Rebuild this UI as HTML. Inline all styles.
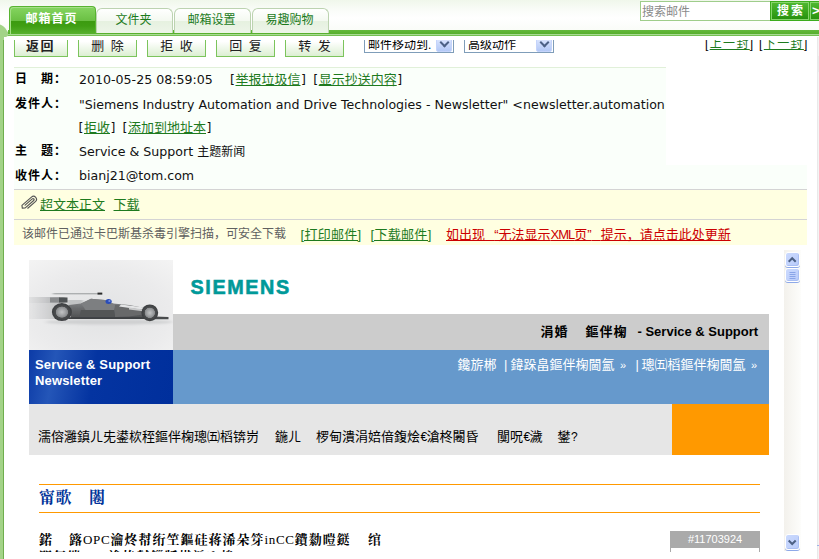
<!DOCTYPE html>
<html lang="zh-CN">
<head>
<meta charset="utf-8">
<title>邮箱</title>
<style>
*{box-sizing:border-box;margin:0;padding:0}
html,body{width:819px;height:559px;overflow:hidden;background:#fff}
body{position:relative;font-family:"Liberation Sans","Noto Sans CJK SC",sans-serif;font-size:12px;color:#000}
.abs{position:absolute}
a{color:#1e7a1e;text-decoration:underline}
/* top */
#topbg{left:0;top:0;width:819px;height:33px;background:linear-gradient(#f0f7eb 0,#fbfdfa 35%,#ffffff 55%,#f8fbf6 100%)}
#leftbar{left:0;top:24px;width:5px;height:535px;background:#a5d18b;border-right:1px solid #63ad42;border-top-right-radius:0}
#greenbar{left:8px;top:30px;width:815px;height:6px;background:linear-gradient(#63b93b 0,#58b02f 60%,#a9da94 70%,#a9da94 82%,#74c052 84%,#74c052 100%)}
.tab{top:8px;height:25px;border:1px solid #bcd3b0;border-bottom:none;border-radius:6px 6px 0 0;background:linear-gradient(#ffffff 0%,#f4f9f1 48%,#e6f1e0 52%,#edf5e9 100%);color:#1b7a1b;font-size:12px;text-indent:-2px;text-align:center;line-height:22px}
.tab.on{top:6px;height:28px;border:1px solid #58b431;border-bottom:none;border-radius:4px 4px 0 0;background:linear-gradient(#85d560 0%,#6bc044 50%,#3c9b10 53%,#3f9e13 70%,#57b12e 100%);box-shadow:inset 1px 1px 0 #a4e087;color:#fff;font-weight:bold;line-height:25px;letter-spacing:1px}
#search{left:640px;top:1px;width:131px;height:20px;border:1px solid #9fcd8b;background:#fff;color:#8a8a8a;font-size:12px;line-height:20px;padding-left:1px}
#sbtn{left:770px;top:1px;width:40px;height:20px;background:linear-gradient(#52b933 0,#3aa61d 50%,#258f0d 100%);border:1px solid #3cac1c;box-shadow:inset 0 0 0 1px #86d56b;color:#fff;font-weight:bold;font-size:12px;line-height:18px;text-align:center;letter-spacing:2px;padding-left:2px}
#sbtn2{left:809px;top:1px;width:12px;height:20px;background:linear-gradient(#52b933 0,#3aa61d 50%,#258f0d 100%);border:1px solid #3cac1c;box-shadow:inset 0 0 0 1px #86d56b;color:#fff;font-weight:bold;font-size:13px;line-height:17px;text-align:left;padding-left:2px}
.btn{word-spacing:3px;top:-6px;height:23px;border:1px solid #7cc45c;background:linear-gradient(#ffffff 30%,#dcefd2 100%);font-size:13px;color:#222;text-align:center;line-height:22px;overflow:hidden}
.sel{top:-6px;height:19px;border:1px solid #7f9db9;background:#fff;font-size:12px;line-height:20px;padding-left:3px;overflow:hidden;white-space:nowrap}
.sel i{position:absolute;right:1px;top:1px;width:16px;height:16px;background:linear-gradient(#e2eaff,#b3c8f6);border-radius:2px;border:1px solid #c5d4fb}
.sel i:after{content:"";position:absolute;left:4px;top:2px;width:5px;height:5px;border-right:2px solid #4d6185;border-bottom:2px solid #4d6185;transform:rotate(45deg)}
#hdr{left:14px;top:67px;width:793px;height:122px;background:#fafffa;border-top:1px solid #e1f0d9}
#hdrwhite{left:666px;top:66px;width:141px;height:99px;background:#fff}
.lab{left:15px;font-weight:bold;font-size:12px;letter-spacing:1px;white-space:nowrap}
.val{left:79px;font-family:"DejaVu Sans","Noto Sans CJK SC",sans-serif;font-size:12.6px;line-height:18px;white-space:nowrap;color:#111}
.val a,.val span{font-size:13px;line-height:1}
.br{display:inline-block;width:5.9px;text-align:center;font-weight:normal}
#att{left:14px;top:189px;width:793px;height:30px;background:#ffffe1;border-top:1px solid #d4d4d4}
#scan{left:14px;top:219px;width:793px;height:26px;background:#ffffe1;border-top:1px solid #d4d4d4}
.sb{width:15px;height:16px;border:1px solid #fff;border-radius:3px;background:linear-gradient(135deg,#cbdafe,#b9cbfa);box-shadow:0 1px 0 #8ea9e8, inset -1px -1px 0 #aabff3;overflow:hidden}
.q{letter-spacing:5.5px}
.t1{top:73px;font-weight:bold;font-size:13px;line-height:18px;white-space:nowrap;color:#000}
.t2{top:106px;font-size:13px;line-height:18px;white-space:nowrap;color:#fff}
.t3{top:178px;font-size:13px;line-height:18px;white-space:nowrap;color:#000}
.eu{display:inline-block;width:6.5px;font-family:'Liberation Sans',sans-serif;font-size:12px;text-align:center;letter-spacing:-1px}
.t4{top:237px;font-family:'Liberation Serif','Noto Serif CJK SC',serif;font-weight:bold;font-size:16px;line-height:22px;white-space:nowrap;color:#003399;letter-spacing:0.5px}
.t5{top:281px;font-family:'Liberation Serif','Noto Serif CJK SC',serif;font-weight:bold;font-size:13px;line-height:18px;white-space:nowrap;color:#000;letter-spacing:1px}
.la{font-weight:normal;letter-spacing:0.7px}
</style>
</head>
<body>
<div class="abs" id="topbg"></div>
<svg class="abs" style="left:0;top:0" width="12" height="559" viewBox="0 0 12 559"><path d="M0 24.5 Q4.5 26 6.5 30 Q7.5 32.5 10 33.5 L10 37 L4 37 L4 559 L0 559 Z" fill="#a3d388"/><rect x="3" y="40" width="1" height="519" fill="#6fae4e"/></svg>
<div class="abs" id="greenbar"></div>

<div class="abs tab on" style="left:9px;width:87px">邮箱首页</div>
<div class="abs tab" style="left:96px;width:77px">文件夹</div>
<div class="abs tab" style="left:174px;width:77px">邮箱设置</div>
<div class="abs tab" style="left:252px;width:77px">易趣购物</div>

<div class="abs" id="search">搜索邮件</div>
<div class="abs" id="sbtn">搜索</div>
<div class="abs" id="sbtn2">&gt;</div>

<!-- white panel -->
<div class="abs" id="panel" style="left:4px;top:36px;width:815px;height:523px;background:#fff;border-top-left-radius:5px"></div>

<div class="abs" id="tool" style="left:0;top:40px;width:819px;height:26px;overflow:hidden">
<div class="abs btn" style="left:14px;width:54px;font-weight:bold;letter-spacing:1.5px;text-indent:-1px">返回</div>
<div class="abs btn" style="left:78px;width:59px">删 除</div>
<div class="abs btn" style="left:147px;width:59px">拒 收</div>
<div class="abs btn" style="left:216px;width:59px">回 复</div>
<div class="abs btn" style="left:285px;width:59px">转 发</div>
<div class="abs sel" style="left:364px;width:90px">邮件移动到.<i></i></div>
<div class="abs sel" style="left:464px;width:90px">高级动作<i></i></div>
<div class="abs" style="left:705px;top:-4px;font-size:12px;letter-spacing:1.35px;white-space:nowrap;line-height:16px">[<a href="#">上一封</a>] [<a href="#">下一封</a>]</div>

</div>
<div class="abs" id="hdr"></div>
<div class="abs" id="hdrwhite"></div>
<div class="abs lab" style="top:69px">日　期：</div>
<div class="abs val" style="top:71px">2010-05-25 08:59:05</div>
<div class="abs val" style="top:71px;left:229.6px"><b class="br">[</b><a href="#">举报垃圾信</a><b class="br">]</b></div>
<div class="abs val" style="top:71px;left:312.8px"><b class="br">[</b><a href="#">显示抄送内容</a><b class="br">]</b></div>
<div class="abs lab" style="top:94px">发件人：</div>
<div class="abs val" style="top:95.5px;width:586.2px;overflow:hidden">"Siemens Industry Automation and Drive Technologies - Newsletter" &lt;newsletter.automation@siemens.com&gt;</div>
<div class="abs val" style="top:118.5px;left:78.1px"><b class="br">[</b><a href="#">拒收</a><b class="br">]</b></div>
<div class="abs val" style="top:118.5px;left:122.1px"><b class="br">[</b><a href="#">添加到地址本</a><b class="br">]</b></div>
<div class="abs lab" style="top:141px">主　题：</div>
<div class="abs val" style="top:143px">Service &amp; Support <span style="font-size:12px">主题新闻</span></div>
<div class="abs lab" style="top:166px">收件人：</div>
<div class="abs val" style="top:167px">bianj21@tom.com</div>

<div class="abs" id="att"></div>
<svg class="abs" style="left:20px;top:194px" width="18" height="18" viewBox="0 0 18 18"><g transform="translate(9.2 9) rotate(-41)" fill="none" stroke="#565656" stroke-width="1.15" stroke-linejoin="round" stroke-linecap="round"><path d="M-4.5 -1.1 L5 -1.1 A1.1 1.1 0 0 1 5 1.1 L-6.2 1.1 L-8.6 -0.6 L-7 -3 L5.6 -3 A3 3 0 0 1 5.6 3 L-4.5 3"/></g></svg>
<div class="abs" style="left:40px;top:194px;font-size:13px;white-space:nowrap"><a href="#">超文本正文</a><a href="#" style="margin-left:8.5px">下载</a></div>
<div class="abs" id="scan"></div>
<div class="abs" style="left:22px;top:224px;font-size:12px;white-space:nowrap;color:#606060">该邮件已通过卡巴斯基杀毒引擎扫描，可安全下载</div>
<div class="abs" style="left:300.5px;top:224px;font-size:13px;white-space:nowrap;letter-spacing:0.3px"><a href="#">[打印邮件]</a><a href="#" style="margin-left:9px">[下载邮件]</a></div>
<div class="abs" style="left:446px;top:224px;font-size:13px;white-space:nowrap"><a href="#" style="color:#c00">如出现<span class="q">&nbsp;</span>“无法显示<span style="letter-spacing:-1px">XML</span>页”<span class="q">&nbsp;</span>提示，请点击此处更新</a></div>

<div class="abs" style="left:817px;top:37px;width:1px;height:522px;background:#e9e9e9"></div>
<div class="abs" style="left:818px;top:37px;width:1px;height:522px;background:#f4f4f4"></div>
<div class="abs" style="left:818px;top:56px;width:1px;height:16px;background:#ebebeb"></div>
<div class="abs" style="left:817px;top:545px;width:2px;height:1px;background:#9db4e8"></div>
<!-- email body -->
<div class="abs" id="mail" style="left:14px;top:250px;width:787px;height:302px;overflow:hidden;background:#fff">
 <div class="abs" style="left:15px;top:10px;width:144px;height:90px;overflow:hidden">
 <svg width="144" height="90" viewBox="0 0 144 90">
  <defs>
   <radialGradient id="bgc" cx="0.5" cy="0.6" r="0.8"><stop offset="0" stop-color="#e2e3e4"/><stop offset="0.6" stop-color="#ebebec"/><stop offset="1" stop-color="#f4f4f4"/></radialGradient>
   <filter id="bl" x="-20%" y="-20%" width="140%" height="140%"><feGaussianBlur stdDeviation="0.55"/></filter>
   <filter id="bl2" x="-20%" y="-50%" width="140%" height="200%"><feGaussianBlur stdDeviation="1.6 0.5"/></filter>
   <filter id="bl3" x="-20%" y="-50%" width="140%" height="200%"><feGaussianBlur stdDeviation="2 1"/></filter>
   <linearGradient id="str" x1="0" x2="1"><stop offset="0" stop-color="#a9abad" stop-opacity="0.1"/><stop offset="1" stop-color="#8a8c8e" stop-opacity="0.75"/></linearGradient>
   <linearGradient id="body" x1="0" y1="0" x2="0" y2="1"><stop offset="0" stop-color="#8b8d8f"/><stop offset="0.45" stop-color="#6b6d6f"/><stop offset="1" stop-color="#4c4e50"/></linearGradient>
   <radialGradient id="wh"><stop offset="0" stop-color="#c2c3c4"/><stop offset="0.35" stop-color="#a2a4a6"/><stop offset="0.58" stop-color="#8a8c8e"/><stop offset="0.64" stop-color="#4b4d4f"/><stop offset="1" stop-color="#3c3e40"/></radialGradient>
  </defs>
  <rect width="144" height="90" fill="url(#bgc)"/>
  <ellipse cx="80" cy="62" rx="64" ry="2.6" fill="#cfd0d1" filter="url(#bl3)"/>
  <g filter="url(#bl2)">
   <rect x="-4" y="37" width="40" height="6" fill="url(#str)"/>
   <rect x="-4" y="43" width="34" height="16" fill="url(#str)" opacity="0.55"/>
   <rect x="24" y="33" width="46" height="1.4" fill="#9a9c9e" opacity="0.75"/>
   <rect x="38" y="40" width="16" height="8" fill="#a8aaac" opacity="0.6"/>
  </g>
  <g filter="url(#bl)">
   <rect x="68.5" y="32.6" width="4.8" height="2" fill="#2a2b2c"/>
   <rect x="21" y="37.5" width="10" height="5" fill="#8a8c8e"/>
   <rect x="30" y="37.5" width="8.5" height="5" fill="#505254"/>
   <path d="M40 45 L52 43.5 L62 38.7 L76 40 L84 43.5 L100 45 L121 49 L126 54 L121 58 L100 58 L86 59 L42 59 Z" fill="url(#body)"/>
   <path d="M52 43.5 L62 38.7 L76 40 L86 44.5 L85 50 L58 52 Z" fill="#7d7f81"/>
   <path d="M52 50 L85 50 L86 58 L50 58.5 Z" fill="#525456"/>
   <path d="M86 45 L100 45.5 L121 49.5 L124 53 L100 56.5 L86 57 Z" fill="#68696b"/>
   <path d="M92 44.6 L112 47 L120 49.3 L108 49 L90 46.5 Z" fill="#e4e5e6"/>
   <path d="M100 47.5 L118 50 L116 51.5 L100 49.5 Z" fill="#c9cacb"/>
   <rect x="40" y="57.2" width="78" height="1.8" fill="#3e4042"/>
   <path d="M126 56.4 L139.5 57 L139.5 59.2 L124 59.2 Z" fill="#4a4c4e"/>
   <ellipse cx="79.6" cy="41.6" rx="3.1" ry="2.5" fill="#2b4db8"/>
   <ellipse cx="80.4" cy="41" rx="1.2" ry="0.8" fill="#8ea3e6"/>
   <ellipse cx="32.9" cy="52.1" rx="10" ry="9" fill="url(#wh)"/>
   <ellipse cx="120.8" cy="52.8" rx="8.4" ry="8.4" fill="url(#wh)"/>
  </g>
 </svg>
 </div>
 <div class="abs" style="left:15px;top:100px;width:144px;height:54px;background:linear-gradient(100deg,#0c3ba7 0%,#2456b8 18%,#1646ad 30%,#0434a1 45%,#002f9c 100%)"></div>
 <div class="abs" style="left:21px;top:107px;font-family:'Liberation Sans',sans-serif;font-weight:bold;font-size:13px;line-height:16px;color:#fff;white-space:nowrap;letter-spacing:0.15px">Service &amp; Support<br>Newsletter</div>
 <div class="abs" id="logo" style="left:176.5px;top:25px;font-family:'Liberation Sans',sans-serif;font-weight:bold;font-size:19.8px;line-height:24px;color:#009999;-webkit-text-stroke:0.6px #009999;letter-spacing:1.6px;white-space:nowrap">SIEMENS</div>
 <div class="abs" style="left:159px;top:64px;width:596px;height:36px;background:#cccccc"></div>
 <div class="abs" style="left:159px;top:100px;width:596px;height:54px;background:#6699cc"></div>
 <div class="abs t1" style="left:526.5px;letter-spacing:1px">涓婚</div>
 <div class="abs t1" style="left:571.5px;letter-spacing:1px">鏂伴椈</div>
 <div class="abs t1" style="left:623.5px;font-family:'Liberation Sans',sans-serif">- Service &amp; Support</div>
 <div class="abs t2" style="left:443.5px">鑱旂郴</div>
 <div class="abs t2" style="left:490px">|</div>
 <div class="abs t2" style="left:496.5px">鍏跺畠鏂伴椈閫氳</div>
 <div class="abs t2" style="left:606px;font-size:11px">»</div>
 <div class="abs t2" style="left:621.5px">|</div>
 <div class="abs t2" style="left:627.5px">璁㈤槄鏂伴椈閫氳</div>
 <div class="abs t2" style="left:737px;font-size:11px">»</div>
 <div class="abs" style="left:15px;top:154px;width:643px;height:51px;background:#e6e6e6"></div>
 <div class="abs" style="left:658px;top:154px;width:97px;height:51px;background:#ff9900"></div>
 <div class="abs t3" style="left:24px">濡傛灉鎮ㄦ兂鍙栨秷鏂伴椈璁㈤槄锛岃</div>
 <div class="abs t3" style="left:261px">鍦ㄦ</div>
 <div class="abs t3" style="left:302px">椤甸潰涓婄偣鍑烩<span class="eu">€</span>滄柊闂昏</div>
 <div class="abs t3" style="left:483px">闃呪<span class="eu">€</span>濊</div>
 <div class="abs t3" style="left:543.5px">鐢<span class="eu">?</span></div>
 <div class="abs" style="left:25px;top:234px;width:721px;height:1px;background:#ff9900"></div>
 <div class="abs t4" style="left:25px">甯歌</div>
 <div class="abs t4" style="left:75px">闂</div>
 <div class="abs" style="left:25px;top:262px;width:721px;height:1px;background:#ff9900"></div>
 <div class="abs t5" style="left:25px">鍩</div>
 <div class="abs t5" style="left:55px">簬<span class="la">OPC</span>瀹炵幇绗笁鏂硅蒋浠朵笌<span class="la">inCC</span>鐨勬暟鎹</div>
 <div class="abs t5" style="left:354px">绾</div>
 <div class="abs t5" style="left:25px;top:298px">閫氳繃<span class="la">OPC</span>瀹炵幇鏁版嵁浜ゆ崲</div>
 <div class="abs" style="left:656px;top:281px;width:90px;height:17px;background:#aaaaaa;color:#fff;font-family:'Liberation Sans',sans-serif;font-size:11px;line-height:16px;text-align:center">#11703924</div>
 <div class="abs" style="left:656px;top:298px;width:90px;height:10px;border:1px solid #aaa;border-top:none"></div>
 <!-- scrollbar -->
 <div class="abs" style="left:770px;top:0;width:17px;height:301px;background:linear-gradient(90deg,#f3f1ec,#fdfdfb)"></div>
 <div class="abs sb" style="left:771px;top:2px;height:15px"><svg width="15" height="15" viewBox="0 0 15 15"><path d="M2.7 8.7 L6.2 5.2 L9.7 8.7" fill="none" stroke="#4d6185" stroke-width="2"/></svg></div>
 <div class="abs sb" style="left:771px;top:18px;height:14px"><svg width="15" height="12" viewBox="0 0 15 12"><path d="M3.5 3.5h6M3.5 5.5h6M3.5 7.5h6M3.5 9.5h6" stroke="#8aa5e8" stroke-width="1"/></svg></div>
 <div class="abs sb" style="left:771px;top:284px;height:16px"><svg width="15" height="15" viewBox="0 0 15 15"><path d="M2.7 5.5 L6.2 9 L9.7 5.5" fill="none" stroke="#4d6185" stroke-width="2"/></svg></div>
</div>

</body>
</html>
